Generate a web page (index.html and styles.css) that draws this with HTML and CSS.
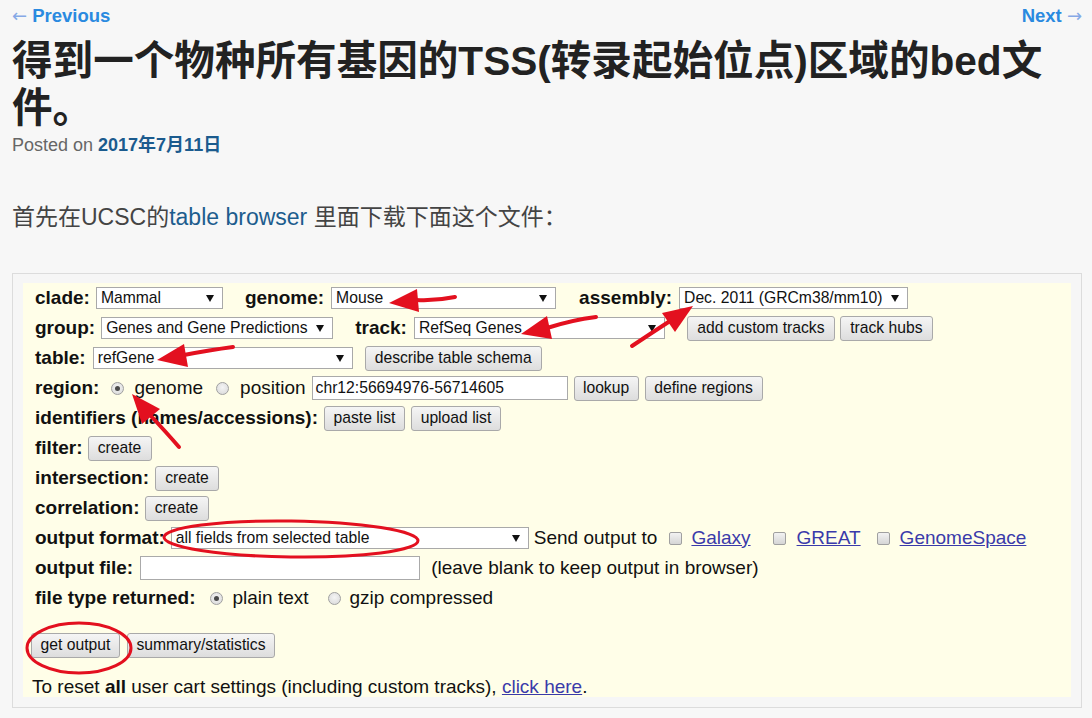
FILE: index.html
```html
<!DOCTYPE html>
<html lang="zh-CN">
<head>
<meta charset="utf-8">
<title>得到一个物种所有基因的TSS区域的bed文件</title>
<link rel="stylesheet" href="styles.css">
</head>
<body>
<div class="page">
  <nav class="nav">
    <a class="nav-link" href="#"><span class="arr">←</span> Previous</a>
    <a class="nav-link" href="#">Next <span class="arr">→</span></a>
  </nav>
  <h1 class="title">得到一个物种所有基因的TSS(转录起始位点)区域的bed文件。</h1>
  <div class="meta">Posted on <a class="date" href="#">2017年7月11日</a></div>
  <p class="intro">首先在UCSC的<a class="intro-link" href="#">table browser</a> 里面下载下面这个文件：</p>

  <div class="shot">
    <div class="ucsc">
      <div class="row">
        <span class="lbl">clade:</span>
        <span class="sel w-clade m6">Mammal</span>
        <span class="lbl m22">genome:</span>
        <span class="sel w-genome m7">Mouse</span>
        <span class="lbl m23">assembly:</span>
        <span class="sel w-assembly m7">Dec. 2011 (GRCm38/mm10)</span>
      </div>
      <div class="row">
        <span class="lbl">group:</span>
        <span class="sel w-group m6">Genes and Gene Predictions</span>
        <span class="lbl m22">track:</span>
        <span class="sel w-track m7">RefSeq Genes</span>
        <span class="btn w-addct m22">add custom tracks</span>
        <span class="btn w-hubs m5">track hubs</span>
      </div>
      <div class="row">
        <span class="lbl">table:</span>
        <span class="sel w-table m7">refGene</span>
        <span class="btn w-describe m12">describe table schema</span>
      </div>
      <div class="row">
        <span class="lbl">region:</span>
        <span class="radio checked m12"></span>
        <span class="txt m10">genome</span>
        <span class="radio m13"></span>
        <span class="txt m11">position</span>
        <span class="inp w-pos m6">chr12:56694976-56714605</span>
        <span class="btn w-lookup m6">lookup</span>
        <span class="btn w-define m6">define regions</span>
      </div>
      <div class="row">
        <span class="lbl">identifiers (names/accessions):</span>
        <span class="btn w-paste m6">paste list</span>
        <span class="btn w-upload m6">upload list</span>
      </div>
      <div class="row">
        <span class="lbl">filter:</span>
        <span class="btn w-create m5">create</span>
      </div>
      <div class="row">
        <span class="lbl">intersection:</span>
        <span class="btn w-create m6">create</span>
      </div>
      <div class="row">
        <span class="lbl">correlation:</span>
        <span class="btn w-create m5">create</span>
      </div>
      <div class="row">
        <span class="lbl">output format:</span>
        <span class="sel w-format m6">all fields from selected table</span>
        <span class="txt m5">Send output to</span>
        <span class="check m12"></span>
        <a class="ulink m9" href="#">Galaxy</a>
        <span class="check m22"></span>
        <a class="ulink m11" href="#">GREAT</a>
        <span class="check m16"></span>
        <a class="ulink m10" href="#">GenomeSpace</a>
      </div>
      <div class="row">
        <span class="lbl">output file:</span>
        <span class="inp w-file m7"></span>
        <span class="txt m11">(leave blank to keep output in browser)</span>
      </div>
      <div class="row">
        <span class="lbl">file type returned:</span>
        <span class="radio checked m15"></span>
        <span class="txt m9">plain text</span>
        <span class="radio m19"></span>
        <span class="txt m9">gzip compressed</span>
      </div>
      <div class="row actions">
        <span class="btn w-get">get output</span>
        <span class="btn w-summary m7">summary/statistics</span>
      </div>
      <div class="reset">To reset <b>all</b> user cart settings (including custom tracks), <a class="ulink" href="#">click here</a>.</div>
    </div>

    <svg class="marks" viewBox="12 273 1070 436" width="1070" height="436" aria-hidden="true">
      <g fill="none" stroke="#e3101f" stroke-width="4" stroke-linecap="round">
        <path d="M455 297 Q436 301 416 300"/>
        <path d="M596 317 Q572 320 547 328"/>
        <path d="M632 346 Q650 334 670 321"/>
        <path d="M233 347 Q210 350 184 355"/>
        <path d="M179 447 Q166 432 150 415"/>
      </g>
      <g fill="#e3101f">
        <polygon points="389,303 419,312 417,289"/>
        <polygon points="521,334 552,339 547,316"/>
        <polygon points="693,306 662,313 675,332"/>
        <polygon points="157,360 188,367 184,344"/>
        <polygon points="132,394 142,424 160,409"/>
      </g>
      <g fill="none" stroke="#e3101f" stroke-width="3">
        <ellipse cx="291" cy="539" rx="127" ry="18" transform="rotate(0.8 291 539)"/>
        <ellipse cx="79" cy="648" rx="52" ry="25"/>
      </g>
    </svg>
  </div>
</div>
</body>
</html>
```

FILE: styles.css
```css
* { box-sizing: border-box; }

html, body {
  margin: 0;
  background: #f7f7f7;
}

body {
  font-family: "Liberation Sans", "Noto Sans CJK SC", sans-serif;
  color: #222;
}

.page {
  padding: 4px 10px 0 12px;
}

/* top navigation */
.nav {
  display: flex;
  justify-content: space-between;
  line-height: 24px;
  height: 24px;
}

.nav-link {
  font-size: 18.5px;
  font-weight: bold;
  color: #2a8ae0;
  text-decoration: none;
}

.nav-link .arr {
  font-family: "DejaVu Sans", sans-serif;
  font-weight: normal;
  font-size: 18px;
  color: #86a9e6;
}

/* heading */
.title {
  margin: 10px 0 0;
  font-size: 40.6px;
  line-height: 47px;
  font-weight: bold;
  color: #222;
}

.meta {
  margin-top: 1px;
  font-size: 18px;
  line-height: 24px;
  color: #666;
}

.date {
  color: #1b5b8e;
  font-weight: bold;
  text-decoration: none;
}

.intro {
  margin: 44px 0 0;
  font-size: 23px;
  line-height: 32px;
  color: #444;
}

.intro-link {
  color: #1d5d8e;
  text-decoration: none;
}

/* embedded screenshot of the UCSC table browser */
.shot {
  position: relative;
  margin-top: 40px;
  border: 1px solid #dcdcdc;
  padding: 9px 10px 10px 10px;
  background: #f6f6f6;
}

.ucsc {
  background: #fffee8;
  padding: 0 0 0 12px;
  color: #111;
  font-family: "Liberation Sans", Arial, sans-serif;
}

.row {
  display: flex;
  align-items: center;
  height: 30px;
  white-space: nowrap;
}

.lbl {
  font-size: 19px;
  font-weight: bold;
}

.txt {
  font-size: 19px;
}

.sel {
  position: relative;
  display: flex;
  align-items: center;
  height: 22px;
  padding-left: 4px;
  background: #fff;
  border: 1px solid #a9a9a9;
  font-size: 15.7px;
  color: #111;
}

.sel::after {
  content: "";
  position: absolute;
  right: 8px;
  top: 7px;
  border-left: 4px solid transparent;
  border-right: 4px solid transparent;
  border-top: 7px solid #111;
}

.inp {
  display: flex;
  align-items: center;
  height: 24px;
  padding-left: 3px;
  background: #fff;
  border: 1px solid #aaa;
  font-size: 15.7px;
}

.btn {
  display: flex;
  align-items: center;
  justify-content: center;
  height: 25px;
  background: linear-gradient(#f5f5f5, #dddddd);
  border: 1px solid #a9a9a9;
  border-radius: 3px;
  font-size: 15.7px;
  color: #111;
}

.radio {
  position: relative;
  width: 13px;
  height: 13px;
  border-radius: 50%;
  border: 1px solid #a0a0a0;
  background: radial-gradient(circle at 50% 40%, #f4f4f4, #d8d8d8);
}

.radio.checked::after {
  content: "";
  position: absolute;
  left: 3px;
  top: 3px;
  width: 5px;
  height: 5px;
  border-radius: 50%;
  background: #4a4a4a;
}

.check {
  width: 13px;
  height: 13px;
  border-radius: 2px;
  border: 1px solid #a0a0a0;
  background: linear-gradient(#f2f2f2, #d6d6d6);
}

.ulink {
  font-size: 19px;
  color: #3a3aaa;
  text-decoration: underline;
}

.actions {
  margin-top: 19px;
  margin-left: -4px;
  height: 26px;
}

.reset {
  margin-top: 18px;
  margin-left: -3px;
  font-size: 19px;
  line-height: 22px;
  height: 21px;
  white-space: nowrap;
}

/* widths */
.w-clade { width: 127px; }
.w-genome { width: 225px; }
.w-assembly { width: 229px; }
.w-group { width: 232px; }
.w-track { width: 251px; }
.w-table { width: 260px; }
.w-format { width: 358px; }
.w-pos { width: 256px; }
.w-file { width: 280px; }
.w-addct { width: 148px; }
.w-hubs { width: 93px; }
.w-describe { width: 177px; }
.w-lookup { width: 65px; }
.w-define { width: 118px; }
.w-paste { width: 81px; }
.w-upload { width: 90px; }
.w-create { width: 64px; }
.w-get { width: 89px; }
.w-summary { width: 148px; }

/* horizontal spacing */
.m5 { margin-left: 5px; }
.m6 { margin-left: 6px; }
.m7 { margin-left: 7px; }
.m9 { margin-left: 9px; }
.m10 { margin-left: 10px; }
.m11 { margin-left: 11px; }
.m12 { margin-left: 12px; }
.m13 { margin-left: 13px; }
.m15 { margin-left: 15px; }
.m16 { margin-left: 16px; }
.m19 { margin-left: 19px; }
.m22 { margin-left: 22px; }
.m23 { margin-left: 23px; }

/* red annotations drawn over the screenshot */
.marks {
  position: absolute;
  left: -1px;
  top: -1px;
  pointer-events: none;
}
```
